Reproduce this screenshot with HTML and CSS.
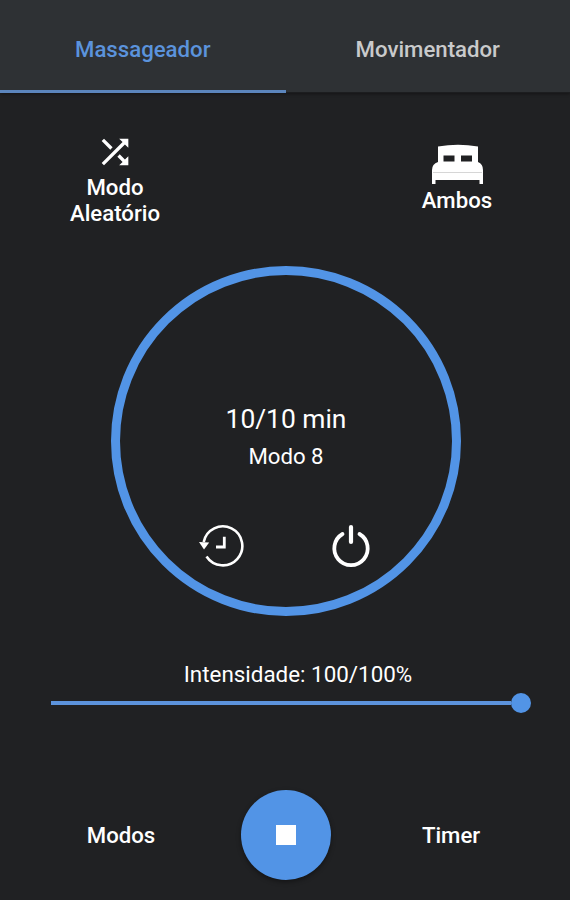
FILE: index.html
```html
<!DOCTYPE html>
<html lang="pt-BR">
<head>
    <meta charset="UTF-8">
    <meta name="viewport" content="width=device-width, initial-scale=1.0">
    <title>Massageador</title>
    <link rel="stylesheet" href="styles.css">
</head>
<body>
    <nav class="tabs">
        <div class="tab active"><span>Massageador</span></div>
        <div class="tab"><span>Movimentador</span></div>
    </nav>

    <div class="options">
        <div class="option option-mode">
            <svg class="icon-shuffle" viewBox="0 0 24 24" fill="#fff">
                <path d="M10.59 9.17L5.41 4 4 5.41l5.17 5.17 1.42-1.41zM14.5 4l2.04 2.04L4 18.59 5.41 20 17.96 7.46 20 9.5V4h-5.5zm.33 9.41l-1.41 1.41 3.13 3.13L14.5 20H20v-5.5l-2.04 2.04-3.13-3.13z"/>
            </svg>
            <span>Modo<br>Aleatório</span>
        </div>
        <div class="option option-side">
            <svg class="icon-bed" viewBox="0 0 51 41">
                <path fill="#fff" d="M6 2.500Q26 -1 46 2.500V18Q51 20 51 26V40H47.500V36H3.500V40H0V26Q0 20 6 18Z"/>
                <path fill="#202123" d="M11.500 11.500H22.500V17.500H11.500ZM29 11.500H40V17.500H29Z"/>
                <path stroke="#ccc" stroke-width=".8" d="M1 28.500H50"/>
            </svg>
            <span>Ambos</span>
        </div>
    </div>

    <div class="dial">
        <div class="dial-time">10/10 min</div>
        <div class="dial-mode">Modo 8</div>
        <div class="dial-actions">
            <svg class="icon-history" viewBox="0 0 46 44" fill="none" stroke="#fff">
                <path stroke-width="2.600" d="M4.700 18A19.500 19.500 0 1 1 7.500 32.500"/>
                <path stroke-width="2.800" d="M25.300 12.700V23H17"/>
                <path fill="#fff" stroke="none" d="M0 18L10.200 18.500L5 25.500Z"/>
            </svg>
            <svg class="icon-power" viewBox="0 0 40 44" fill="none" stroke="#fff" stroke-width="3.800">
                <path stroke-linecap="round" d="M11.500 10A16.700 16.700 0 1 0 28.500 10"/>
                <path stroke-width="4.200" stroke-linecap="round" d="M20 3V18"/>
            </svg>
        </div>
    </div>

    <div class="intensity">
        <div class="intensity-label">Intensidade: 100/100%</div>
        <div class="slider">
            <div class="slider-track"></div>
            <div class="slider-thumb"></div>
        </div>
    </div>

    <div class="controls">
        <span>Modos</span>
        <div class="stop-button"><div class="stop-icon"></div></div>
        <span>Timer</span>
    </div>
</body>
</html>
```
FILE: styles.css
```css
* {
    box-sizing: border-box;
}

body {
    width: 570px;
    height: 900px;
    margin: 0;
    overflow: hidden;
    background-color: #202123;
    color: #fff;
    font-family: Roboto, sans-serif;
    font-size: 22.2px;
}

svg {
    display: block;
}

/* Tabs */
.tabs {
    display: flex;
    height: 93px;
    background: linear-gradient(#2e3134 92px, #1c1d1f 92px);
    box-shadow: 0 1px 3px rgba(0, 0, 0, 0.4);
}

.tab {
    width: 50%;
    padding-top: 36px;
    text-align: center;
    font-weight: 500;
    line-height: 26px;
    color: #c9cacb;
}

.tab.active {
    width: 286px;
    color: #5b93dc;
    border-bottom: 3px solid #5c86bd;
}

/* Mode and side */
.options {
    display: flex;
    justify-content: space-between;
    height: 173px;
    padding: 39px 72px 0 55px;
    font-weight: 500;
    line-height: 26px;
    text-align: center;
}

.option {
    display: flex;
    flex-direction: column;
    align-items: center;
}

.option-mode {
    width: 120px;
}

.option-side {
    width: 82px;
    padding-top: 12px;
}

.icon-shuffle {
    width: 40px;
    height: 40px;
    margin-bottom: 2px;
}

.icon-bed {
    width: 51px;
    height: 41px;
    margin-bottom: 2px;
}

/* Timer dial */
.dial {
    width: 350px;
    height: 350px;
    margin-left: 111px;
    padding-top: 128px;
    border: 9px solid #5294e6;
    border-radius: 50%;
    text-align: center;
}

.dial-time {
    font-size: 26.4px;
    line-height: 32px;
}

.dial-mode {
    margin-top: 7px;
    line-height: 28px;
}

.dial-actions {
    display: flex;
    justify-content: space-between;
    margin-top: 54px;
    padding: 0 81px 0 79px;
}

.icon-history {
    width: 46px;
    height: 44px;
}

.icon-power {
    width: 40px;
    height: 44px;
}

/* Intensity */
.intensity {
    padding: 44px 39px 0 51px;
}

.intensity-label {
    padding-left: 14px;
    font-size: 22.4px;
    line-height: 28px;
    text-align: center;
}

.slider {
    display: flex;
    align-items: center;
    height: 20px;
    margin-top: 5px;
}

.slider-track {
    flex: 1;
    height: 4px;
    background-color: #5c93dc;
}

.slider-thumb {
    width: 20px;
    height: 20px;
    border-radius: 50%;
    background-color: #5294e6;
}

/* Bottom controls */
.controls {
    display: grid;
    grid-template-columns: 165px 165px 165px;
    align-items: center;
    justify-items: center;
    margin: 77px 0 0 38.5px;
    font-weight: 500;
}

.stop-button {
    display: flex;
    align-items: center;
    justify-content: center;
    width: 90px;
    height: 90px;
    margin-right: 1px;
    border-radius: 50%;
    background-color: #5294e6;
    box-shadow: 0 2px 5px rgba(0, 0, 0, 0.4);
}

.stop-icon {
    width: 20px;
    height: 20px;
    background-color: #fff;
}
```
